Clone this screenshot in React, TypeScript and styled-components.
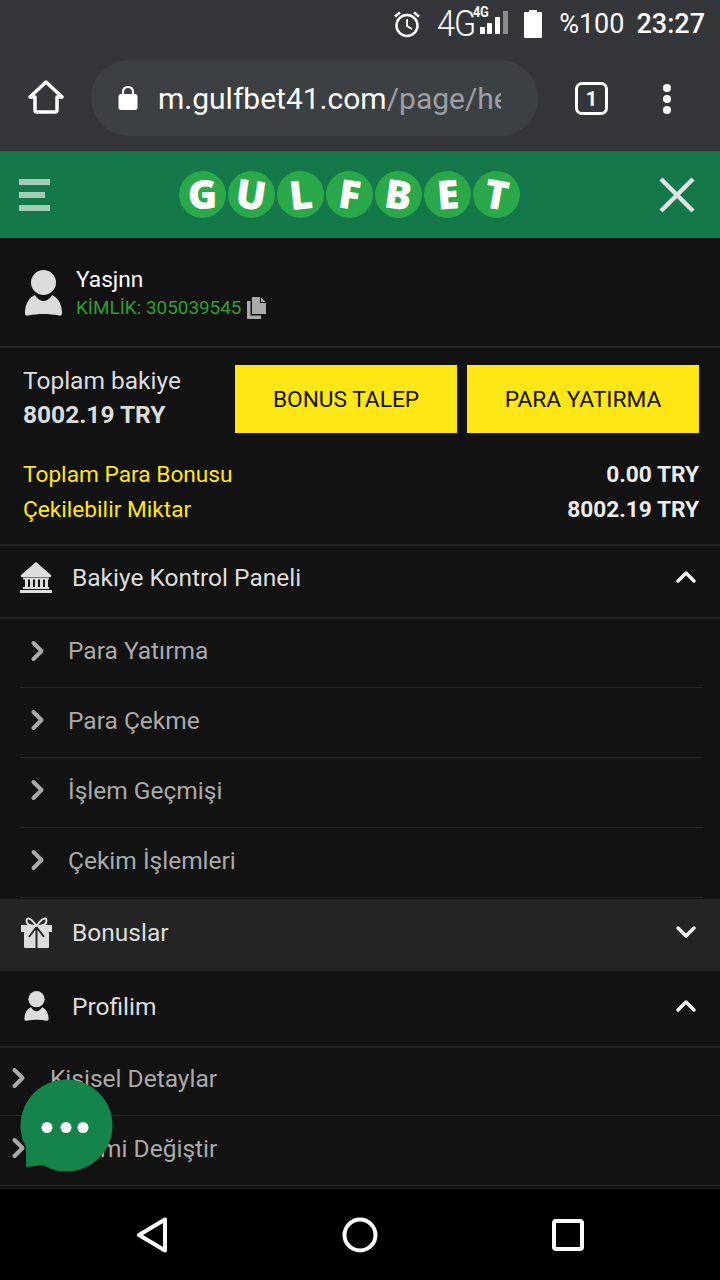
import { ReactNode } from 'react';
import styled, { createGlobalStyle } from 'styled-components';

const GlobalStyle = createGlobalStyle`
  html, body {
    margin: 0;
    padding: 0;
    background: #121212;
  }
  * {
    box-sizing: border-box;
  }
`;

const Page = styled.div`
  position: relative;
  width: 720px;
  height: 1280px;
  overflow: hidden;
  display: flex;
  flex-direction: column;
  background: #121212;
  font-family: Roboto, 'Liberation Sans', sans-serif;
`;

const StatusBar = styled.div`
  height: 48px;
  flex: none;
  background: #35363a;
  display: flex;
  align-items: center;
  justify-content: flex-end;
  padding: 0 15px 0 0;
  color: #fff;
`;

const Network = styled.span`
  font-size: 36px;
  font-weight: 300;
  line-height: 42px;
  margin-left: 16px;
  width: 36px;
  letter-spacing: -1px;
  transform: scaleX(0.9);
  transform-origin: left center;
`;

const NetworkSmall = styled.div`
  position: relative;
  width: 35px;
  height: 30px;
`;

const NetworkTiny = styled.span`
  position: absolute;
  left: 0;
  top: -5px;
  font-size: 14px;
  font-weight: 700;
  line-height: 16px;
  letter-spacing: -0.3px;
  transform: scaleX(0.92);
  transform-origin: left center;
`;

const BatterySlot = styled.div`
  display: flex;
  margin-left: 16px;
`;

const Percent = styled.span`
  font-size: 27px;
  margin-left: 17px;
`;

const Clock = styled.span`
  font-size: 27px;
  font-weight: 500;
  margin-left: 12px;
`;

const BrowserBar = styled.div`
  height: 103px;
  flex: none;
  background: #35363a;
  display: flex;
  align-items: flex-start;
  padding: 12px 0 0 28px;
`;

const HomeSlot = styled.div`
  padding-top: 20px;
`;

const UrlPill = styled.div`
  width: 447px;
  height: 76px;
  margin-left: 27px;
  border-radius: 38px;
  background: #3d4043;
  display: flex;
  align-items: center;
  padding-left: 27px;
`;

const UrlText = styled.div`
  width: 343px;
  margin-left: 20px;
  overflow: hidden;
  white-space: nowrap;
  font-size: 30px;
  color: #fff;
`;

const UrlPath = styled.span`
  color: #9aa0a6;
`;

const TabCount = styled.div`
  width: 33px;
  height: 33px;
  margin: 22px 0 0 37px;
  border: 3px solid #fff;
  border-radius: 7px;
  display: flex;
  align-items: center;
  justify-content: center;
  color: #fff;
  font-size: 20px;
  font-weight: 700;
`;

const MenuDots = styled.div`
  display: flex;
  flex-direction: column;
  gap: 3px;
  margin: 24px 0 0 55px;
`;

const MenuDot = styled.span`
  width: 8px;
  height: 8px;
  border-radius: 50%;
  background: #fff;
`;

const SiteHeader = styled.header`
  height: 87px;
  flex: none;
  background: #15784a;
  display: flex;
  align-items: center;
  justify-content: space-between;
  padding: 0 25px 0 19px;
`;

const Burger = styled.div`
  width: 31px;
  display: flex;
  flex-direction: column;
  gap: 7px;
`;

const BurgerLine = styled.span<{ $short?: boolean }>`
  height: 6px;
  width: ${(p) => (p.$short ? '26px' : '31px')};
  background: #a1cdb7;
`;

const Logo = styled.div`
  display: flex;
  gap: 2px;
  margin: 0 10px 1px 0;
`;

const LogoBall = styled.div`
  width: 47px;
  height: 47px;
  border-radius: 50%;
  background: #2aa84a;
  display: flex;
  align-items: center;
  justify-content: center;
`;

const LogoLetter = styled.span<{ $tilt: number }>`
  color: #fff;
  font-family: 'Open Sans', Roboto, sans-serif;
  font-size: 40px;
  font-weight: 800;
  line-height: 1;
  transform: rotate(${(p) => p.$tilt}deg);
`;

const ProfileRow = styled.section`
  height: 110px;
  flex: none;
  border-bottom: 2px solid #222;
  display: flex;
  align-items: flex-start;
  padding: 30px 0 0 25px;
`;

const ProfileIcon = styled.div`
  display: flex;
  margin-top: 2px;
`;

const ProfileText = styled.div`
  margin-left: 14px;
`;

const UserName = styled.div`
  font-size: 22.7px;
  line-height: 24px;
  color: #fff;
`;

const UserId = styled.div`
  display: flex;
  align-items: center;
  gap: 6px;
  margin-top: 4px;
  font-size: 18.9px;
  line-height: 24px;
  color: #2f9e36;
`;

const BalanceBlock = styled.section`
  height: 198px;
  flex: none;
  border-bottom: 2px solid #222;
  padding: 17px 21px 0 23px;
`;

const BalanceTop = styled.div`
  display: flex;
  justify-content: space-between;
  align-items: flex-start;
`;

const BalanceLabel = styled.div`
  margin: -1px 0 1px;
  font-size: 24.5px;
  line-height: 33px;
  color: #ddd;
`;

const BalanceValue = styled.div`
  font-size: 24.5px;
  line-height: 33px;
  font-weight: 700;
  color: #ddd;
`;

const Buttons = styled.div`
  display: flex;
  gap: 10px;
`;

const YellowButton = styled.button<{ $wide?: boolean }>`
  width: ${(p) => (p.$wide ? '232px' : '222px')};
  height: 68px;
  padding: 0;
  border: none;
  background: #ffe716;
  color: #121212;
  font-family: inherit;
  font-size: 22.7px;
`;

const SummaryList = styled.div`
  margin-top: 24px;
  display: flex;
  flex-direction: column;
`;

const SummaryRow = styled.div`
  display: flex;
  justify-content: space-between;
  height: 35px;
  align-items: center;
`;

const SummaryLabel = styled.span`
  font-size: 22.7px;
  color: #ffe716;
`;

const SummaryValue = styled.span`
  font-size: 22.7px;
  font-weight: 700;
  color: #eee;
`;

const SectionRow = styled.div<{ $active?: boolean; $height: number; $lift: number }>`
  height: ${(p) => p.$height}px;
  flex: none;
  display: flex;
  align-items: center;
  padding: 0 22px ${(p) => p.$lift}px 20px;
  background: ${(p) => (p.$active ? '#252525' : 'transparent')};
  border-bottom: 2px solid #222;
`;

const SectionIcon = styled.div`
  width: 32px;
  display: flex;
  justify-content: center;
  color: #ddd;
`;

const SectionTitle = styled.span`
  flex: 1;
  margin-left: 20px;
  font-size: 24.5px;
  color: #ddd;
`;

const SubList = styled.div`
  flex: none;
`;

const SubRow = styled.div<{ $flush?: boolean; $height: number; $lift?: number }>`
  height: ${(p) => p.$height}px;
  margin: ${(p) => (p.$flush ? '0' : '0 17px 0 20px')};
  display: flex;
  align-items: center;
  padding: 0 0 ${(p) => p.$lift ?? 5}px ${(p) => (p.$flush ? '11px' : '10px')};
  border-bottom: 1px solid #262626;
`;

const SubTitle = styled.span<{ $flush?: boolean }>`
  margin-left: ${(p) => (p.$flush ? '23px' : '22px')};
  font-size: 24.5px;
  color: #aaa;
`;

const Gap = styled.div<{ $height: number }>`
  height: ${(p) => p.$height}px;
  flex: none;
`;

const BottomNav = styled.nav`
  position: absolute;
  left: 0;
  right: 0;
  bottom: 0;
  height: 91px;
  background: #000;
  display: flex;
  align-items: center;
  padding: 0 136px;
  justify-content: space-between;
`;

const ChatBubble = styled.div`
  position: absolute;
  left: 20px;
  top: 1079px;
  width: 94px;
  height: 94px;
`;

const Chevron = ({ up, color }: { up?: boolean; color: string }) => (
  <svg width="24" height="24" viewBox="0 0 24 24" fill="none">
    <path
      d={up ? 'M4 16L12 8L20 16' : 'M4 8L12 16L20 8'}
      stroke={color}
      strokeWidth="3.5"
      strokeLinecap="round"
      strokeLinejoin="round"
    />
  </svg>
);

const SideChevron = () => (
  <svg width="16" height="22" viewBox="0 0 16 22" fill="none">
    <path
      d="M3.5 3L11.5 11L3.5 19"
      stroke="#aaa"
      strokeWidth="4"
      strokeLinecap="round"
      strokeLinejoin="round"
    />
  </svg>
);

const PersonIcon = ({ width, height }: { width: number; height: number }) => (
  <svg width={width} height={height} viewBox="0 0 37 46" fill="#dcdcdc">
    <circle cx="18.5" cy="12.5" r="12.5" />
    <path d="M10 25C12 29 16 31 18.5 31C21 31 25 29 27 25C32 27 37 33 37 43C37 45 36 46 34 45.500C24 43.500 13 43.500 3 45.500C1 46 0 45 0 43C0 33 5 27 10 25Z" />
  </svg>
);

const BankIcon = () => (
  <svg width="32" height="31" viewBox="0 0 32 31" fill="#dcdcdc">
    <path d="M16 0L31 13V15H1V13Z" />
    <rect x="3" y="15.500" width="26" height="2" />
    <rect x="5" y="17" width="3" height="8" />
    <rect x="10" y="17" width="3" height="8" />
    <rect x="15" y="17" width="3" height="8" />
    <rect x="20" y="17" width="3" height="8" />
    <rect x="25" y="17" width="3" height="8" />
    <rect x="3" y="25" width="26" height="2" />
    <rect x="0" y="28" width="32" height="3" />
  </svg>
);

const GiftIcon = () => (
  <svg width="31" height="31" viewBox="0 0 31 31">
    <path
      d="M15.500 9C12 4 10 1.500 7.500 1.500C5 1.500 5 5 7 7C9 8.500 12 9 15.500 9ZM15.500 9C19 4 21 1.500 23.500 1.500C26 1.500 26 5 24 7C22 8.500 19 9 15.500 9Z"
      fill="none"
      stroke="#dcdcdc"
      strokeWidth="2"
    />
    <rect x="0" y="8" width="31" height="7" fill="#dcdcdc" />
    <rect x="3" y="15" width="25" height="16" rx="1" fill="#dcdcdc" />
    <path d="M15.500 10L8 20M15.500 10L23 20M15.500 10V31" stroke="#252525" strokeWidth="2" fill="none" />
  </svg>
);

const CopyIcon = () => (
  <svg width="19" height="22" viewBox="0 0 19 22" fill="#aaa">
    <path d="M5 0H13V6H19V17H5Z" />
    <path d="M14 0.500L18.500 5H14Z" />
    <path d="M0 4H3.500V18.500H14V22H1C0.400 22 0 21.600 0 21Z" />
  </svg>
);

const AlarmIcon = () => (
  <svg width="28" height="28" viewBox="0 0 28 28" fill="none" stroke="#fff" strokeWidth="2.500">
    <circle cx="14" cy="15.500" r="10.500" />
    <path d="M14 9V16L19 19" strokeWidth="2" />
    <path d="M2 6.500L7 2.500M26 6.500L21 2.500" />
  </svg>
);

const SignalBars = () => (
  <svg width="35" height="30" viewBox="0 0 35 30">
    <rect x="7" y="18" width="5" height="7" fill="#fff" />
    <rect x="14" y="14" width="5" height="11" fill="#fff" />
    <rect x="22" y="8" width="5" height="17" fill="#fff" />
    <rect x="30" y="2" width="5" height="23" fill="#8a8b8d" />
  </svg>
);

const BatteryIcon = () => (
  <svg width="18" height="28" viewBox="0 0 18 28" fill="#fff">
    <rect x="5" y="0" width="8" height="3" />
    <rect x="0" y="2" width="18" height="26" rx="1" />
  </svg>
);

const HomeIcon = () => (
  <svg width="36" height="34" viewBox="0 0 36 34" fill="none">
    <path
      d="M2 17L18 2L34 17H29V30C29 31.500 28 32 27 32H9C8 32 7 31.500 7 30V17Z"
      stroke="#fff"
      strokeWidth="3.500"
      strokeLinejoin="round"
    />
  </svg>
);

const LockIcon = () => (
  <svg width="20" height="26" viewBox="0 0 20 26" fill="#fff">
    <path d="M5 10V7C5 4 7 2 10 2C13 2 15 4 15 7V10" fill="none" stroke="#fff" strokeWidth="2.200" />
    <rect x="0.500" y="9" width="19" height="16" rx="2.500" />
  </svg>
);

const CloseIcon = () => (
  <svg width="36" height="36" viewBox="0 0 36 36">
    <path d="M2 2L34 34M34 2L2 34" stroke="#e2e2e2" strokeWidth="4.500" />
  </svg>
);

const BackIcon = () => (
  <svg width="32" height="36" viewBox="0 0 32 36" fill="none">
    <path d="M29 2.500V33.500L3 18Z" stroke="#fff" strokeWidth="4" strokeLinejoin="round" />
  </svg>
);

const CircleIcon = () => (
  <svg width="36" height="36" viewBox="0 0 36 36" fill="none">
    <circle cx="18" cy="18" r="15.500" stroke="#fff" strokeWidth="4" />
  </svg>
);

const SquareIcon = () => (
  <svg width="32" height="32" viewBox="0 0 32 32" fill="none">
    <rect x="2" y="2" width="28" height="28" rx="2" stroke="#fff" strokeWidth="4" />
  </svg>
);

const letters: [string, number][] = [
  ['G', 0],
  ['U', 8],
  ['L', -6],
  ['F', 8],
  ['B', 8],
  ['E', -4],
  ['T', 10],
];

const balanceItems: [string, number][] = [
  ['Para Yatırma', 69],
  ['Para Çekme', 70],
  ['İşlem Geçmişi', 70],
  ['Çekim İşlemleri', 70],
];

const Section = ({
  icon,
  title,
  open,
  active,
  height,
  lift,
}: {
  icon: ReactNode;
  title: string;
  open?: boolean;
  active?: boolean;
  height: number;
  lift: number;
}) => (
  <SectionRow $active={active} $height={height} $lift={lift}>
    <SectionIcon>{icon}</SectionIcon>
    <SectionTitle>{title}</SectionTitle>
    <Chevron up={open} color="#f2f2f2" />
  </SectionRow>
);

const App = () => (
  <Page>
    <GlobalStyle />
    <StatusBar>
      <AlarmIcon />
      <Network>4G</Network>
      <NetworkSmall>
        <NetworkTiny>4G</NetworkTiny>
        <SignalBars />
      </NetworkSmall>
      <BatterySlot>
        <BatteryIcon />
      </BatterySlot>
      <Percent>%100</Percent>
      <Clock>23:27</Clock>
    </StatusBar>
    <BrowserBar>
      <HomeSlot>
        <HomeIcon />
      </HomeSlot>
      <UrlPill>
        <LockIcon />
        <UrlText>
          m.gulfbet41.com<UrlPath>/page/he</UrlPath>
        </UrlText>
      </UrlPill>
      <TabCount>1</TabCount>
      <MenuDots>
        <MenuDot />
        <MenuDot />
        <MenuDot />
      </MenuDots>
    </BrowserBar>
    <SiteHeader>
      <Burger>
        <BurgerLine />
        <BurgerLine $short />
        <BurgerLine />
      </Burger>
      <Logo>
        {letters.map(([letter, tilt]) => (
          <LogoBall key={letter}>
            <LogoLetter $tilt={tilt}>{letter}</LogoLetter>
          </LogoBall>
        ))}
      </Logo>
      <CloseIcon />
    </SiteHeader>
    <ProfileRow>
      <ProfileIcon>
        <PersonIcon width={37} height={46} />
      </ProfileIcon>
      <ProfileText>
        <UserName>Yasjnn</UserName>
        <UserId>
          KİMLİK: 305039545 <CopyIcon />
        </UserId>
      </ProfileText>
    </ProfileRow>
    <BalanceBlock>
      <BalanceTop>
        <div>
          <BalanceLabel>Toplam bakiye</BalanceLabel>
          <BalanceValue>8002.19 TRY</BalanceValue>
        </div>
        <Buttons>
          <YellowButton>BONUS TALEP</YellowButton>
          <YellowButton $wide>PARA YATIRMA</YellowButton>
        </Buttons>
      </BalanceTop>
      <SummaryList>
        <SummaryRow>
          <SummaryLabel>Toplam Para Bonusu</SummaryLabel>
          <SummaryValue>0.00 TRY</SummaryValue>
        </SummaryRow>
        <SummaryRow>
          <SummaryLabel>Çekilebilir Miktar</SummaryLabel>
          <SummaryValue>8002.19 TRY</SummaryValue>
        </SummaryRow>
      </SummaryList>
    </BalanceBlock>
    <Section icon={<BankIcon />} title="Bakiye Kontrol Paneli" open height={73} lift={9} />
    <SubList>
      {balanceItems.map(([item, height]) => (
        <SubRow key={item} $height={height}>
          <SideChevron />
          <SubTitle>{item}</SubTitle>
        </SubRow>
      ))}
    </SubList>
    <Gap $height={1} />
    <Section icon={<GiftIcon />} title="Bonuslar" active height={72} lift={4} />
    <Gap $height={2} />
    <Section icon={<PersonIcon width={25} height={30} />} title="Profilim" open height={75} lift={7} />
    <SubList>
      <SubRow $flush $height={68} $lift={7}>
        <SideChevron />
        <SubTitle $flush>Kişisel Detaylar</SubTitle>
      </SubRow>
      <SubRow $flush $height={70}>
        <SideChevron />
        <SubTitle $flush>Şifremi Değiştir</SubTitle>
      </SubRow>
    </SubList>
    <BottomNav>
      <BackIcon />
      <CircleIcon />
      <SquareIcon />
    </BottomNav>
    <ChatBubble>
      <svg width="94" height="94" viewBox="0 0 94 94" fill="#15844a">
        <circle cx="46.500" cy="46.500" r="46" />
        <path d="M6 60V88C14 87 20 86 30 86Z" />
        <circle cx="27" cy="48.500" r="5.500" fill="#fff" />
        <circle cx="46" cy="48.500" r="5.500" fill="#fff" />
        <circle cx="63" cy="48.500" r="5.500" fill="#fff" />
      </svg>
    </ChatBubble>
  </Page>
);

export default App;
